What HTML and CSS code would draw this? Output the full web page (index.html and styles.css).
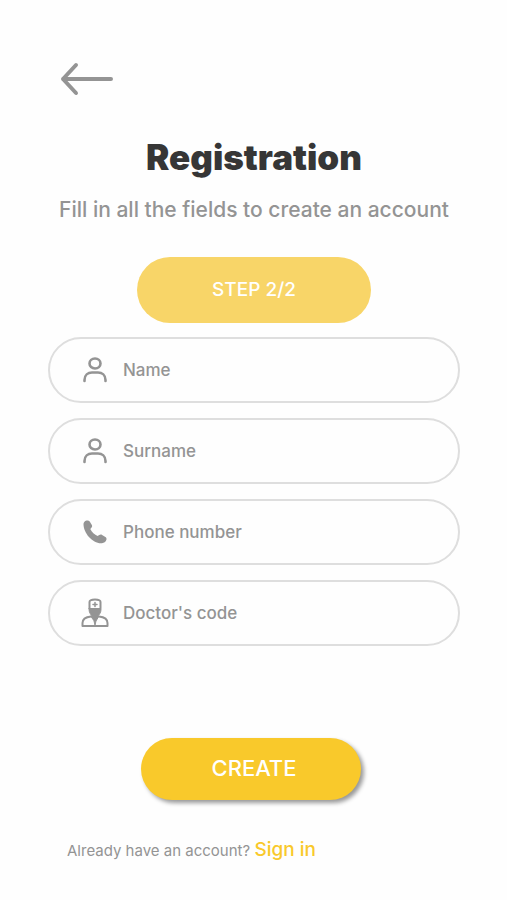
FILE: index.html
```html
<!DOCTYPE html>
<html lang="en">
<head>
<meta charset="utf-8">
<meta name="viewport" content="width=device-width, initial-scale=1">
<title>Registration</title>
<link rel="stylesheet" href="styles.css">
</head>
<body>
<main class="page">
  <button class="back" type="button" aria-label="Back">
    <svg width="54" height="36" viewBox="0 0 54 36" fill="none" stroke="currentColor" stroke-width="4" stroke-linecap="round" stroke-linejoin="round"><path d="M16 4 3 18l13 14M3 18h48"/></svg>
  </button>
  <h1 class="title">Registration</h1>
  <p class="subtitle">Fill in all the fields to create an account</p>
  <p class="step">STEP 2/2</p>
  <form class="form">
    <label class="field">
      <svg class="icon" viewBox="0 0 28 30" fill="none" stroke="currentColor" stroke-width="2.600" stroke-linecap="round"><ellipse cx="14" cy="8.500" rx="5.500" ry="5"/><path d="M3.500 26v-1c0-5 3.500-7.500 7.500-7.500h6c4 0 7.500 2.500 7.500 7.500v1"/></svg>
      <input class="input" type="text" placeholder="Name" aria-label="Name">
    </label>
    <label class="field">
      <svg class="icon" viewBox="0 0 28 30" fill="none" stroke="currentColor" stroke-width="2.600" stroke-linecap="round"><ellipse cx="14" cy="8.500" rx="5.500" ry="5"/><path d="M3.500 26v-1c0-5 3.500-7.500 7.500-7.500h6c4 0 7.500 2.500 7.500 7.500v1"/></svg>
      <input class="input" type="text" placeholder="Surname" aria-label="Surname">
    </label>
    <label class="field">
      <svg class="icon" viewBox="0 0 28 30" fill="currentColor"><path d="M2.500 7c0-1.500 1-3 3-3.500 1.500-.3 2.500 0 3.200 1l2 3.200c.7 1.200.5 2.200-.3 3l-1.100 1.200c1.500 3 4.300 5.600 7.300 7.200l1.600-1.100c1-.7 2-.7 2.900-.1l3.300 2.200c1 .7 1.400 1.700 1 2.700-.8 2.100-2.300 3.300-4.400 3.400C12 27 2.500 16.500 2.500 7z"/></svg>
      <input class="input" type="tel" placeholder="Phone number" aria-label="Phone number">
    </label>
    <label class="field">
      <svg class="icon" viewBox="0 0 28 30" fill="none" stroke="currentColor" stroke-width="2" stroke-linecap="round" stroke-linejoin="round"><path d="M8.500 10V4c0-2 2-2.500 5.500-2.500s5.500.5 5.500 2.500v6"/><path d="M14 4.500v4M12 6.500h4" stroke-width="1.500"/><path d="M8 10.500h12v1c0 3-2 6-4 7h-4c-2-1-4-4-4-7z" fill="currentColor" stroke-width="1"/><path d="M10 18.500c-5 .5-8.500 2.500-8.500 6.500v3h25v-3c0-4-3.500-6-8.500-6.500"/><path d="M10 18h8l-3 5-1 4-1-4z" fill="currentColor" stroke-width="1"/></svg>
      <input class="input" type="text" placeholder="Doctor's code" aria-label="Doctor's code">
    </label>
    <button class="create" type="submit">CREATE</button>
  </form>
  <p class="signin">Already have an account? <a class="link" href="#">Sign in</a></p>
</main>
</body>
</html>
```

FILE: styles.css
```css
* {
  box-sizing: border-box;
}

body {
  margin: 0;
  background: #fefefe;
  color: #949494;
  font-family: Inter, "Liberation Sans", sans-serif;
}

.page {
  display: flex;
  flex-direction: column;
  padding: 61px 47px 32px 48px;
}

.back {
  align-self: flex-start;
  margin-left: 12px;
  padding: 0;
  border: 0;
  background: none;
  color: #949494;
  cursor: pointer;
}

.back svg {
  display: block;
}

.title {
  margin: 38px 0 0;
  color: #363636;
  font-size: 35px;
  font-weight: 900;
  line-height: 44px;
  text-align: center;
}

.subtitle {
  margin: 17px 0 0;
  font-size: 21px;
  font-weight: 500;
  line-height: 28px;
  text-align: center;
  white-space: nowrap;
}

.step {
  align-self: center;
  width: 57%;
  margin: 33px 0 0;
  border-radius: 33px;
  background: #f8d568;
  color: #fff;
  font-size: 19px;
  font-weight: 500;
  line-height: 66px;
  text-align: center;
}

.form {
  display: flex;
  flex-direction: column;
  gap: 15px;
  margin-top: 14px;
}

.field {
  display: flex;
  align-items: center;
  gap: 14px;
  height: 66px;
  padding: 0 31px;
  border: 2px solid #dedede;
  border-radius: 33px;
}

.icon {
  flex: none;
  width: 28px;
  height: 30px;
}

.input {
  flex: 1;
  min-width: 0;
  padding: 0;
  border: 0;
  outline: 0;
  background: none;
  color: #555;
  font: 500 17px/24px Inter, "Liberation Sans", sans-serif;
}

.input::placeholder {
  color: #949494;
  opacity: 1;
}

.create {
  align-self: center;
  width: 220px;
  height: 62px;
  margin: 77px 6px 0 0;
  padding: 0 0 2px 6px;
  border: 0;
  border-radius: 31px;
  background: #f9c92b;
  box-shadow: 3px 3px 4px #999;
  color: #fff;
  font: 500 22px/28px Inter, "Liberation Sans", sans-serif;
  cursor: pointer;
}

.signin {
  margin: 36px 0 0 19px;
  font-size: 15px;
  line-height: 28px;
}

.link {
  color: #f9c92b;
  font-size: 19px;
  font-weight: 500;
  text-decoration: none;
}
```
